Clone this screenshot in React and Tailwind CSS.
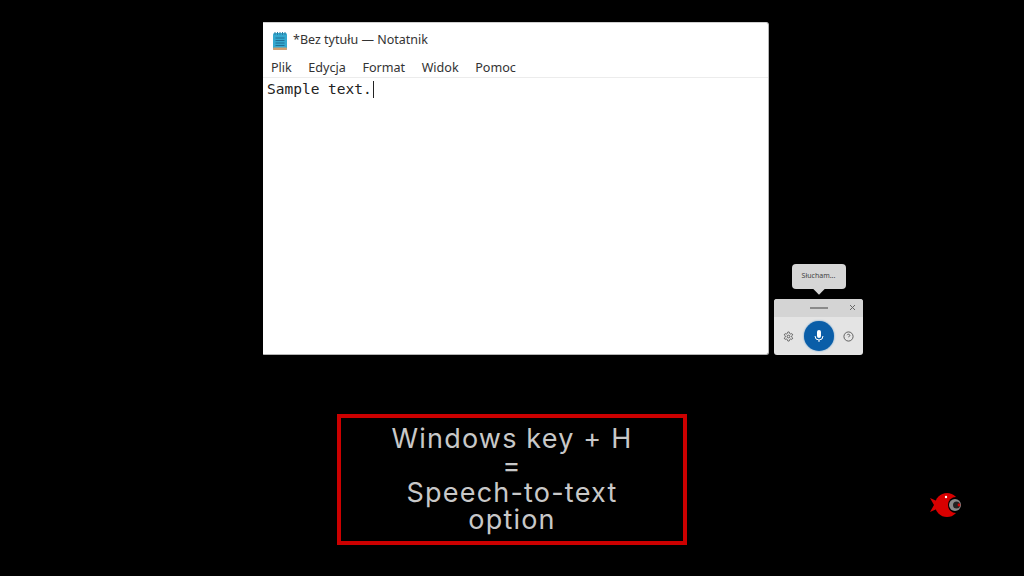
import React from "react";

function NotepadIcon() {
  return (
    <svg width="16" height="20" viewBox="0 0 16 20" className="shrink-0">
      <rect x="1" y="2" width="14" height="17" rx="1.5" fill="#35a9cf" />
      <rect x="1" y="16.5" width="14" height="2.5" rx="1" fill="#cf9f70" />
      <path d="M3 1v3M5.5 1v3M8 1v3M10.5 1v3M13 1v3" stroke="#2a7fa3" strokeWidth="1" />
      <path d="M3.5 7h9M3.5 9.5h9M3.5 12h9M3.5 14.5h9" stroke="#1f6f94" strokeWidth="1" />
    </svg>
  );
}

function Fish() {
  return (
    <svg width="36" height="28" viewBox="0 0 36 28">
      <path d="M2 7l9 4v6l-9 4 4-7z" fill="#d80000" />
      <circle cx="19" cy="14" r="12" fill="#d80000" />
      <circle cx="18" cy="6" r="1.2" fill="#fff" />
      <circle cx="28" cy="14" r="8" fill="#000" />
      <circle cx="27" cy="14" r="6" fill="#8a8a8a" />
      <circle cx="28.5" cy="14" r="3.5" fill="#222" />
      <circle cx="31" cy="14" r="1.4" fill="#d80000" />
    </svg>
  );
}

export default function App() {
  return (
    <div className="relative flex h-[576px] w-[1024px] flex-col overflow-hidden bg-black">
      <div className="ml-[263px] mt-[22px] flex items-end">
        <div className="flex h-[333px] w-[506px] flex-col rounded-tr-[3px] rounded-br-[3px] rounded-bl-[1px] border-t border-r border-b border-t-[#cfcfcf] border-r-[#b5b5b5] border-b-[#b5b5b5] bg-white">
          <div className="flex h-[35px] items-center gap-[5px] pl-[9px] text-[#333]">
            <NotepadIcon />
            <span className="font-['Noto_Sans',sans-serif] text-[12.5px]">*Bez tytułu — Notatnik</span>
          </div>
          <div className="flex h-[20px] items-center gap-[16.5px] border-b border-[#ececec] pl-[8px] font-['Noto_Sans',sans-serif] text-[12.6px] leading-[18px] text-[#333]">
            <span>Plik</span>
            <span>Edycja</span>
            <span>Format</span>
            <span>Widok</span>
            <span>Pomoc</span>
          </div>
          <div className="flex items-start pl-[4px] pt-[2px] font-['DejaVu_Sans_Mono',monospace] text-[14.5px] leading-[18px] text-[#222]">
            <span>Sample text.</span>
            <span className="ml-[1px] mt-[1px] h-[17px] w-px bg-[#222]" />
          </div>
        </div>

        <div className="ml-[5px] flex w-[89px] flex-col items-center">
          <div className="relative mb-[10px] flex h-[25px] w-[54px] items-center justify-center rounded-[4px] bg-[#d6d6d6] font-['Noto_Sans',sans-serif] text-[7px] text-[#444]">
            Słucham...
            <span className="absolute -bottom-[4px] left-1/2 h-[8px] w-[8px] -translate-x-1/2 rotate-45 bg-[#d6d6d6]" />
          </div>
          <div className="flex h-[56px] w-full flex-col overflow-hidden rounded-[3px] bg-[#e4e4e4]">
            <div className="relative flex h-[18px] items-center justify-center bg-[#d4d4d4]">
              <span className="h-[2px] w-[18px] bg-[#8a8a8a]" />
              <svg width="7" height="7" viewBox="0 0 7 7" className="absolute right-[7px] top-[5px]">
                <path d="M1 1l5 5M6 1l-5 5" stroke="#666" strokeWidth="1" />
              </svg>
            </div>
            <div className="flex flex-1 items-center justify-between px-[9px]">
              <svg width="11" height="11" viewBox="0 0 24 24" fill="none" stroke="#555" strokeWidth="2">
                <path d="M12.22 2h-.44a2 2 0 0 0-2 2v.18a2 2 0 0 1-1 1.73l-.43.25a2 2 0 0 1-2 0l-.15-.08a2 2 0 0 0-2.73.73l-.22.38a2 2 0 0 0 .73 2.73l.15.1a2 2 0 0 1 1 1.72v.51a2 2 0 0 1-1 1.74l-.15.09a2 2 0 0 0-.73 2.73l.22.38a2 2 0 0 0 2.73.73l.15-.08a2 2 0 0 1 2 0l.43.25a2 2 0 0 1 1 1.73V20a2 2 0 0 0 2 2h.44a2 2 0 0 0 2-2v-.18a2 2 0 0 1 1-1.73l.43-.25a2 2 0 0 1 2 0l.15.08a2 2 0 0 0 2.73-.73l.22-.39a2 2 0 0 0-.73-2.73l-.15-.08a2 2 0 0 1-1-1.74v-.5a2 2 0 0 1 1-1.74l.15-.09a2 2 0 0 0 .73-2.73l-.22-.38a2 2 0 0 0-2.73-.73l-.15.08a2 2 0 0 1-2 0l-.43-.25a2 2 0 0 1-1-1.73V4a2 2 0 0 0-2-2z" />
                <circle cx="12" cy="12" r="3" />
              </svg>
              <div className="flex h-[30px] w-[30px] items-center justify-center rounded-full bg-[#0a5ea8] shadow-[0_0_2px_#4d8fc7]">
                <svg width="12" height="14" viewBox="0 0 12 14" fill="none">
                  <rect x="4" y="1" width="4" height="8" rx="2" fill="#fff" />
                  <path d="M2 7a4 4 0 0 0 8 0M6 11v2" stroke="#fff" strokeWidth="1" />
                </svg>
              </div>
              <svg width="11" height="11" viewBox="0 0 24 24" fill="none" stroke="#555" strokeWidth="2">
                <circle cx="12" cy="12" r="10" />
                <path d="M9.1 9a3 3 0 0 1 5.8 1c0 2-3 3-3 3M12 17h.01" />
              </svg>
            </div>
          </div>
        </div>
      </div>

      <div className="ml-[337px] mt-[59px] flex h-[131px] w-[350px] items-center justify-center border-[4px] border-[#cc0000] pb-[1px] text-center font-['Inter',sans-serif] text-[27px] leading-[27px] tracking-[1.2px] text-[#c8c8c8]">
        <p>
          Windows key + H
          <br />=<br />
          Speech-to-text
          <br />
          option
        </p>
      </div>

      <div className="absolute left-[928px] top-[491px]">
        <Fish />
      </div>
    </div>
  );
}
